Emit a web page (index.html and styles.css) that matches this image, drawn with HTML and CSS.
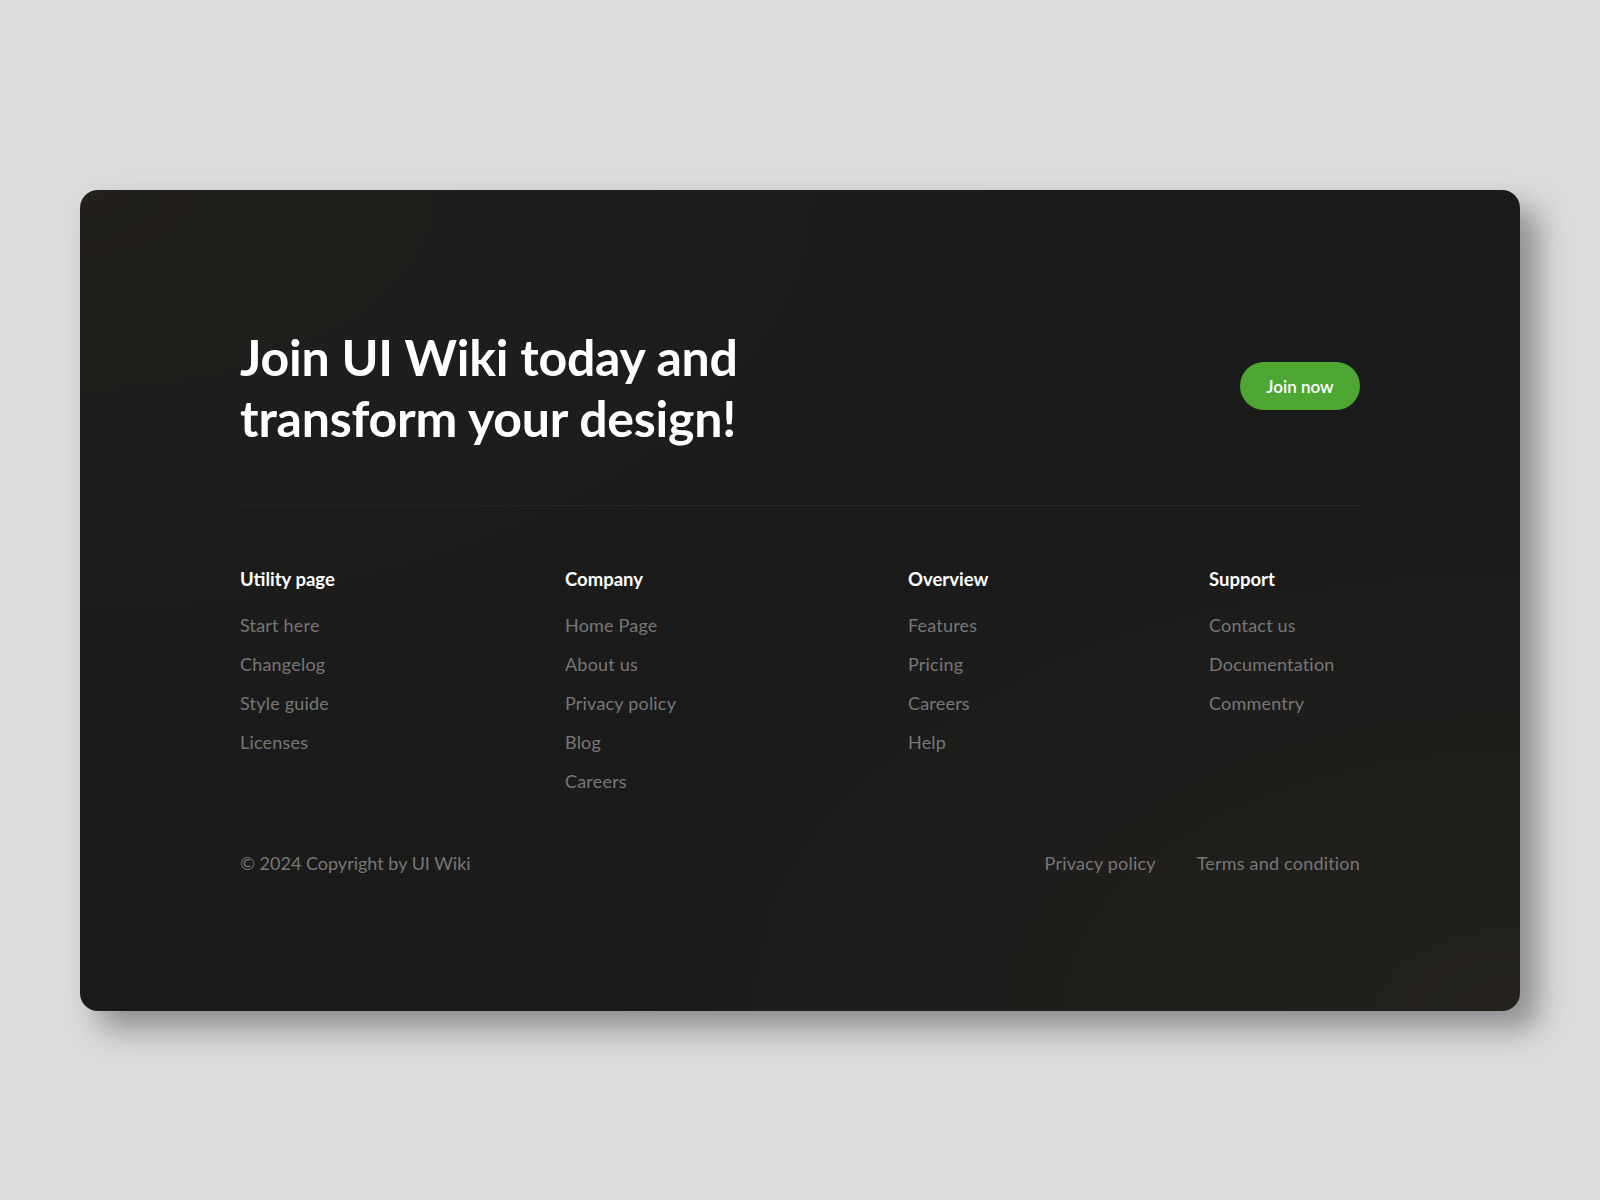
FILE: index.html
```html
<!DOCTYPE html>
<html lang="en">
<head>
  <meta charset="UTF-8" />
  <meta name="viewport" content="width=device-width, initial-scale=1.0"/>
  <title>UI Wiki Footer</title>
  <link rel="stylesheet" href="styles.css">
</head>
<body>
  <footer class="footer">
    <div class="cta">
      <h2 class="cta-title">Join UI Wiki today and<br>transform your design!</h2>
      <button class="join-btn">Join now</button>
    </div>

    <div class="divider"></div>

    <div class="columns">
      <div class="col">
        <h4>Utility page</h4>
        <a href="#">Start here</a>
        <a href="#">Changelog</a>
        <a href="#">Style guide</a>
        <a href="#">Licenses</a>
      </div>
      <div class="col">
        <h4>Company</h4>
        <a href="#">Home Page</a>
        <a href="#">About us</a>
        <a href="#">Privacy policy</a>
        <a href="#">Blog</a>
        <a href="#">Careers</a>
      </div>
      <div class="col">
        <h4>Overview</h4>
        <a href="#">Features</a>
        <a href="#">Pricing</a>
        <a href="#">Careers</a>
        <a href="#">Help</a>
      </div>
      <div class="col">
        <h4>Support</h4>
        <a href="#">Contact us</a>
        <a href="#">Documentation</a>
        <a href="#">Commentry</a>
      </div>
    </div>

    <div class="bottom">
      <span class="copy">© 2024 Copyright by UI Wiki</span>
      <div class="legal">
        <a href="#">Privacy policy</a>
        <a href="#">Terms and condition</a>
      </div>
    </div>
  </footer>
</body>
</html>
```

FILE: styles.css
```css
* {
  box-sizing: border-box;
}

body {
  margin: 0;
  padding: 190px 80px 0;
  min-height: 100vh;
  background: #dbdbdb;
  font-family: 'Lato', 'Inter', sans-serif;
}

.footer {
  width: 1440px;
  height: 821px;
  padding: 0 160px;
  border-radius: 18px;
  background:
    radial-gradient(ellipse at 0% 0%, rgba(40, 36, 30, 0.6), transparent 45%),
    radial-gradient(ellipse at 100% 100%, rgba(42, 38, 30, 0.6), transparent 45%),
    #1b1b1b;
  box-shadow: 18px 18px 30px rgba(0, 0, 0, 0.35);
  color: #fff;
}

.cta {
  display: flex;
  justify-content: space-between;
  align-items: flex-start;
  padding-top: 137px;
  height: 315px;
}

.cta-title {
  margin: 0;
  font-size: 50px;
  line-height: 61px;
  font-weight: 700;
  letter-spacing: -0.2px;
}

.join-btn {
  margin-top: 35px;
  width: 120px;
  height: 48px;
  border: none;
  border-radius: 24px;
  background: #4ea733;
  color: #fff;
  font-family: inherit;
  font-size: 17px;
  font-weight: 600;
  cursor: pointer;
}

.divider {
  height: 1px;
  background: #262626;
}

.columns {
  display: grid;
  grid-template-columns: 325px 343px 301px auto;
  padding-top: 60px;
}

.col {
  display: flex;
  flex-direction: column;
}

.col h4 {
  margin: 0 0 14px;
  font-size: 18.5px;
  line-height: 26px;
  font-weight: 700;
}

.col a {
  color: #777;
  text-decoration: none;
  font-size: 18px;
  line-height: 39px;
  letter-spacing: 0.2px;
}

.bottom {
  display: flex;
  justify-content: space-between;
  align-items: center;
  margin-top: 51px;
  color: #777;
  font-size: 18px;
}

.legal {
  display: flex;
  gap: 41px;
}

.legal a {
  color: #777;
  text-decoration: none;
  letter-spacing: 0.2px;
}
```
